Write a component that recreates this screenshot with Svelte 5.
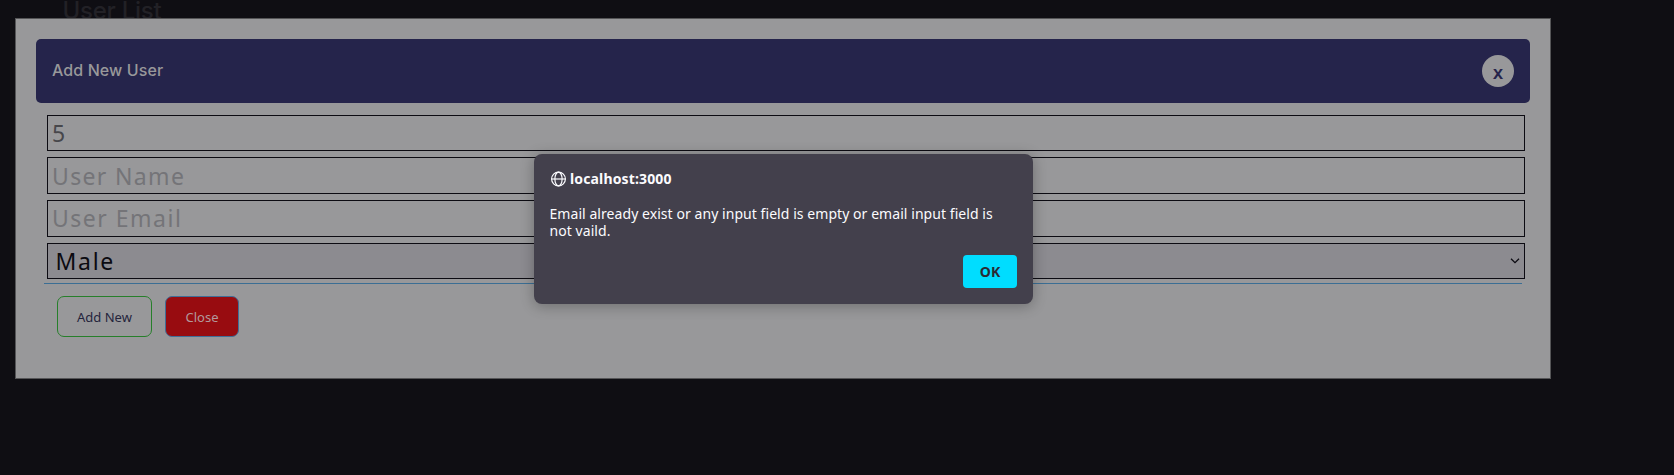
<script>
  const fields = [
    { value: '5', placeholder: '', height: 36 },
    { value: '', placeholder: 'User Name', height: 37 },
    { value: '', placeholder: 'User Email', height: 37, raised: true }
  ];
</script>

<main>
  <h1>User List</h1>
  <section class="modal">
    <header>
      <span class="title">Add New User</span>
      <button class="x"><span>X</span></button>
    </header>
    <form>
      {#each fields as f}
        <div class="field" class:muted={!f.value} class:raised={f.raised} style="height: {f.height}px"><span>{f.value || f.placeholder}</span></div>
      {/each}
      <div class="field select">
        <span>Male</span>
        <svg width="10" height="6" viewBox="0 0 10 6"><path d="M1 .8 5 4.6 9 .8" fill="none" stroke="#0c0b12" stroke-width="1.3" /></svg>
      </div>
    </form>
    <footer>
      <button class="add" type="button"><span>Add New</span></button>
      <button class="close" type="button"><span>Close</span></button>
    </footer>
  </section>

  <div class="dialog" role="alertdialog">
    <div class="host">
      <svg width="16" height="16" viewBox="0 0 16 16" fill="none" stroke="#fbfbfe" stroke-width="1.2">
        <circle cx="8.5" cy="8" r="6.9" />
        <ellipse cx="8.5" cy="8" rx="3.6" ry="6.9" />
        <path d="M1.5 8h14" />
      </svg>
      <strong>localhost:3000</strong>
    </div>
    <p>Email already exist or any input field is empty or email input field is<br />not vaild.</p>
    <button class="ok"><span>OK</span></button>
  </div>
</main>

<style>
  :global(body) { margin: 0; background: #0f0e13; }
  main {
    position: relative;
    box-sizing: border-box;
    height: 475px;
    padding: 18px 0 0 15px;
    overflow: hidden;
    background: #0f0e13;
    font-family: "Noto Sans", "Open Sans", sans-serif;
  }
  button { font-family: inherit; margin: 0; padding: 0; }
  span, strong { white-space: nowrap; }
  h1 {
    position: absolute;
    left: 62.5px;
    top: -7px;
    margin: 0;
    font: 500 24px/36px Inter, sans-serif;
    letter-spacing: -.25px;
    color: #222126;
  }
  .modal {
    position: relative;
    box-sizing: border-box;
    width: 1536px;
    height: 361px;
    padding: 20px;
    border: 1px solid #555557;
    background: #98989a;
  }
  header {
    box-sizing: border-box;
    display: flex;
    justify-content: space-between;
    height: 64px;
    padding: 16px;
    border-radius: 5px;
    background: #25244b;
  }
  .title {
    font: 500 16px/30px Inter, sans-serif;
    letter-spacing: .1px;
    color: #98989a;
  }
  .x {
    width: 32px;
    height: 32px;
    padding-top: 4px;
    border: 0;
    border-radius: 50%;
    background: #98989a;
    color: #25244b;
    font-size: 15px;
    line-height: 28px;
    font-weight: 700;
  }
  form {
    display: flex;
    flex-direction: column;
    gap: 6px;
    padding: 12px 5px 0 11px;
  }
  .field {
    box-sizing: border-box;
    display: flex;
    align-items: center;
    padding-left: 4px;
    border: 1px solid #0c0b12;
    color: #47474b;
    font-size: 23px;
    line-height: 34px;
    letter-spacing: 1.35px;
  }
  .muted { color: #747478; }
  .raised { padding-bottom: 2px; letter-spacing: 1.5px; }
  .select {
    height: 36px;
    justify-content: space-between;
    padding: 0 4px 0 7.5px;
    background: #8c8b90;
    color: #0b0a10;
    letter-spacing: 1.7px;
  }
  footer {
    display: flex;
    gap: 13px;
    margin: 4px 8px 0;
    padding: 12px 13px 0;
    border-top: 1px solid #3b6e94;
  }
  footer button {
    height: 41px;
    border-radius: 7px;
    font-size: 13px;
  }
  .add { width: 95px; border: 1px solid #267f2a; background: none; color: #24243c; }
  .close { width: 74px; border: 1px solid #406f98; background: #980c10; color: #b3999c; }
  .dialog {
    position: absolute;
    left: 534px;
    top: 154px;
    box-sizing: border-box;
    display: flex;
    flex-direction: column;
    width: 499px;
    height: 150px;
    padding: 16px;
    border-radius: 8px;
    background: #43404c;
    color: #fbfbfe;
    box-shadow: 0 2px 14px rgba(12, 12, 13, .3);
  }
  .host { display: flex; align-items: center; gap: 4px; height: 18px; }
  .host strong { font-size: 14px; line-height: 18px; letter-spacing: .14px; }
  p { margin: 17px 0 0 -.5px; font-size: 14px; line-height: 17px; letter-spacing: .06px; white-space: nowrap; }
  .ok {
    align-self: flex-end;
    width: 54px;
    height: 33px;
    margin-top: 16px;
    border: 0;
    border-radius: 4px;
    background: #00ddff;
    color: #2b2a33;
    font-size: 14px;
    font-weight: 700;
  }
</style>
